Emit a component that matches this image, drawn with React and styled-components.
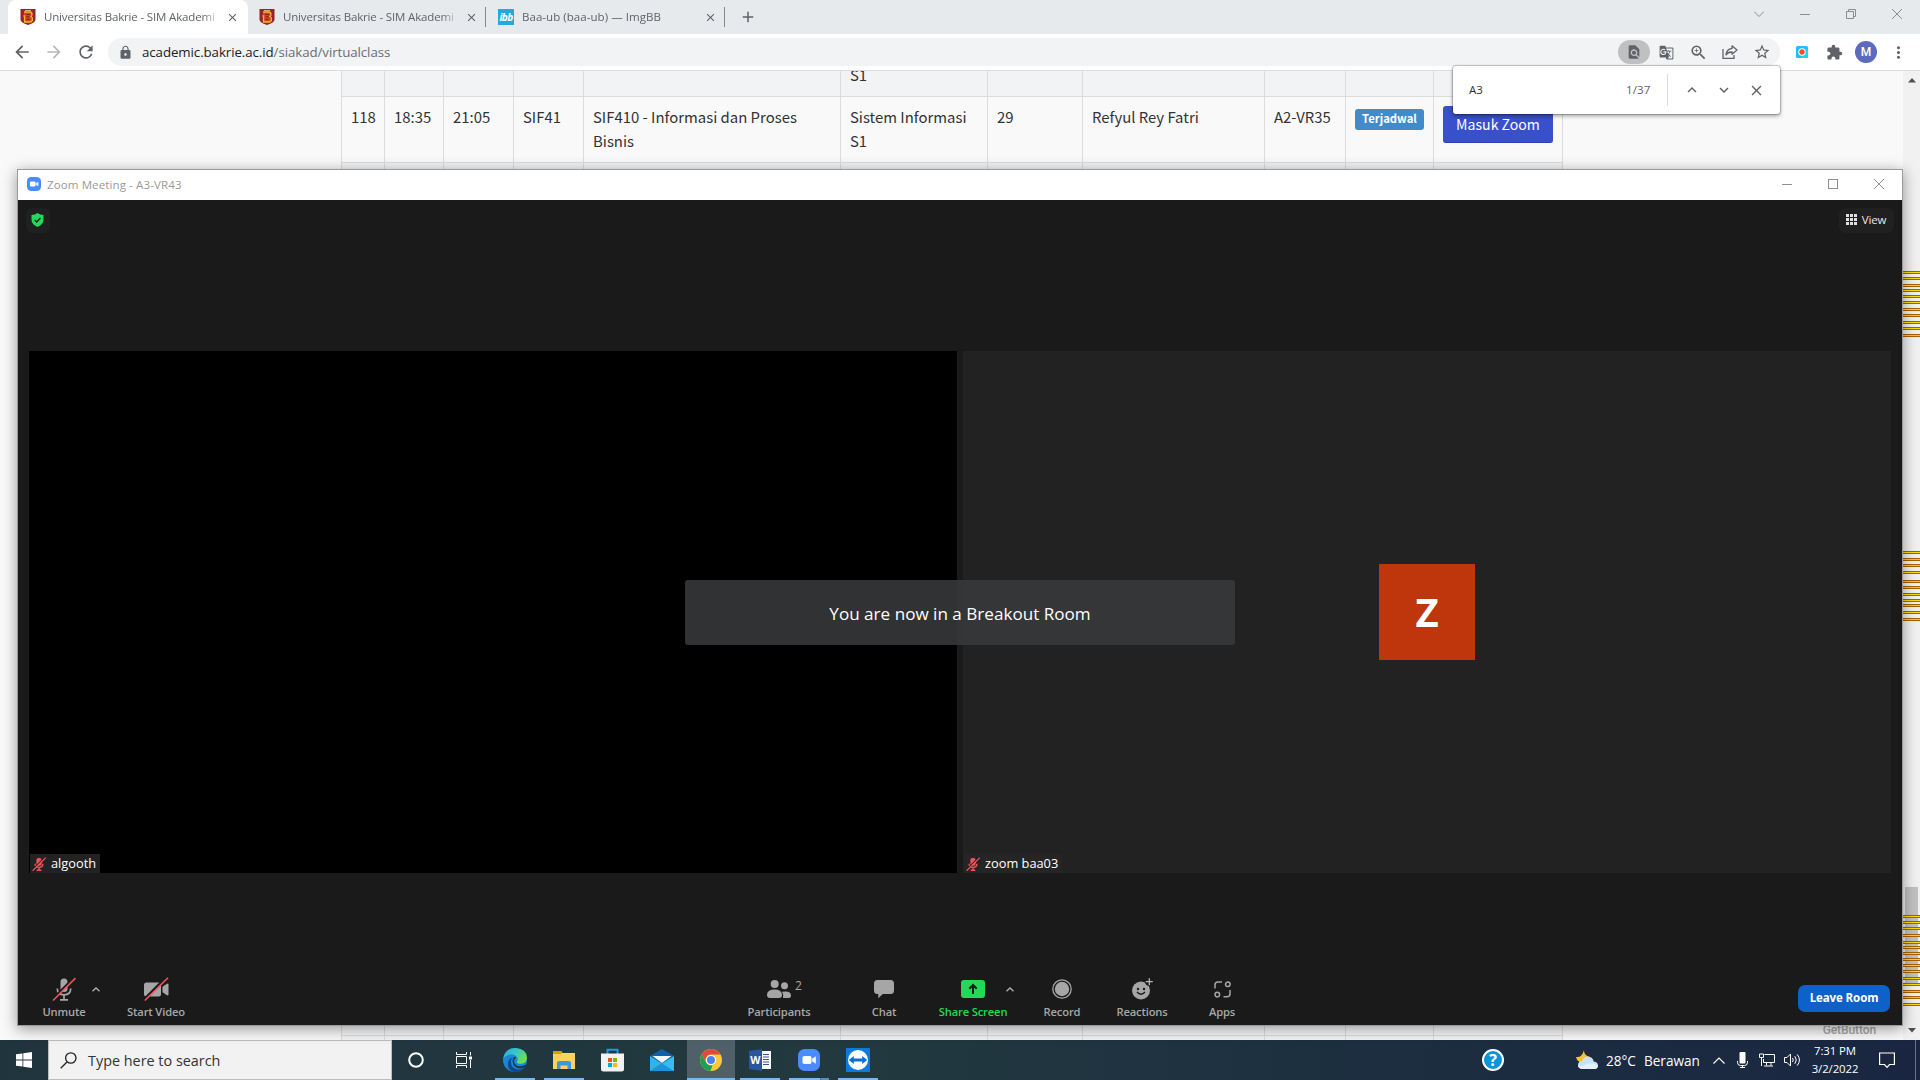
import styled, { createGlobalStyle, css } from "styled-components";
import {
  MdArrowBack,
  MdArrowForward,
  MdRefresh,
  MdLock,
  MdFindInPage,
  MdGTranslate,
  MdZoomIn,
  MdStarBorder,
  MdExtension,
  MdMoreVert,
  MdClose,
  MdAdd,
  MdKeyboardArrowUp,
  MdKeyboardArrowDown,
} from "react-icons/md";

const GlobalStyle = createGlobalStyle`
  * {
    box-sizing: border-box;
  }

  body {
    margin: 0;
    font-family: "Open Sans", "Noto Sans", sans-serif;
  }

  svg {
    display: block;
    flex-shrink: 0;
  }
`;

const Desktop = styled.div`
  position: relative;
  display: flex;
  flex-direction: column;
  width: 1920px;
  height: 1080px;
  overflow: hidden;
`;

/* ---------- browser ---------- */

const Browser = styled.div`
  display: flex;
  flex-direction: column;
  height: 1040px;
  background-color: #ffffff;
`;

const TabStrip = styled.div`
  display: flex;
  height: 34px;
  padding-left: 8px;
  background-color: #e7eaed;
`;

const Tab = styled.div`
  display: flex;
  align-items: center;
  width: 239px;
  padding-left: 12px;
  color: #5f6368;
  ${(props) =>
    props.$active &&
    css`
      background-color: #ffffff;
      border-radius: 8px 8px 0 0;
      box-shadow: 1px 0 0 #ffffff;
    `}
`;

const TabTitle = styled.div`
  width: 175px;
  margin: 0 0 1px 8px;
  font-size: 11.5px;
  letter-spacing: ${(props) => (props.$long ? "-0.16px" : "0.05px")};
  white-space: nowrap;
  mask-image: linear-gradient(to right, #000 158px, transparent 177px);
`;

const TabClose = styled.div`
  display: flex;
  justify-content: center;
  width: 16px;
  margin-left: 5px;
`;

const TabDivider = styled.div`
  width: 1px;
  height: 20px;
  margin-left: auto;
  background-color: #85898d;
`;

const NewTab = styled.div`
  display: flex;
  align-items: center;
  margin-left: 14px;
  color: #5f6368;
`;

const WindowButtons = styled.div`
  display: flex;
  align-items: center;
  height: 28px;
  margin-left: auto;
  color: ${(props) => props.$color || "#8a8c8e"};
`;

const WindowButton = styled.div`
  display: flex;
  justify-content: center;
  width: 46px;
`;

const Toolbar = styled.div`
  display: flex;
  align-items: center;
  height: 37px;
  padding: 0 6px;
  border-bottom: 1px solid #d9dbdd;
  color: #5f6368;
`;

const Slot = styled.div`
  display: flex;
  align-items: center;
  justify-content: center;
  width: 32px;
  height: 24px;
  border-radius: 12px;
  opacity: ${(props) => (props.$faded ? 0.45 : 1)};
  background-color: ${(props) => (props.$active ? "#bfc0c2" : "transparent")};
`;

const AddressBar = styled.div`
  display: flex;
  align-items: center;
  width: 1672px;
  height: 28px;
  margin: 0 6px;
  padding: 0 2px 0 10px;
  border-radius: 14px;
  background-color: #f1f3f4;
`;

const Url = styled.div`
  flex: 1;
  padding-left: 9px;
  font-size: 13.3px;
  letter-spacing: -0.08px;
  color: #6a6e73;

  b {
    font-weight: 400;
    color: #202124;
  }
`;

const Avatar = styled.div`
  width: 22px;
  height: 22px;
  border-radius: 50%;
  background-color: #5c6bc0;
  color: #ffffff;
  font: 500 12px/22px Roboto, sans-serif;
  text-align: center;
`;

const Page = styled.div`
  display: flex;
  flex: 1;
  min-height: 0;
`;

const Content = styled.div`
  position: relative;
  display: flex;
  flex-direction: column;
  justify-content: space-between;
  width: 1903px;
  padding-left: 341px;
  background-color: #f9f9f9;
  overflow: hidden;
`;

const Table = styled.div`
  width: 1222px;
  border-right: 1px solid #dadcde;
  font-family: "Noto Sans CJK SC", sans-serif;
`;

const Row = styled.div`
  display: grid;
  grid-template-columns: 43px 59px 70px 70px 257px 147px 95px 182px 81px 88px 129px;
  height: ${(props) => props.$height}px;
  background-color: ${(props) => (props.$shaded ? "#f2f3f5" : "#f9f9f9")};
  border-bottom: ${(props) => (props.$open ? "none" : "1px solid #dadcde")};
`;

const Cell = styled.div`
  display: flex;
  flex-direction: column;
  align-items: flex-start;
  justify-content: ${(props) => (props.$bottom ? "flex-end" : "flex-start")};
  padding: 8px 0 ${(props) => (props.$bottom ? 9 : 8)}px 9px;
  border-left: 1px solid #dadcde;
  font-size: 14.9px;
  line-height: 24px;
  color: #333333;
  white-space: nowrap;
  overflow: hidden;
`;

const Badge = styled.div`
  width: 69px;
  height: 21px;
  margin-top: 4px;
  border-radius: 3px;
  background-color: #428bca;
  color: #ffffff;
  font-size: 11.3px;
  font-weight: 700;
  line-height: 19px;
  text-align: center;
`;

const JoinButton = styled.div`
  width: 110px;
  height: 37px;
  margin-top: 1px;
  border-radius: 3px;
  border-bottom: 1px solid #2c42b4;
  background-color: #3850cb;
  color: #ffffff;
  font-size: 14.1px;
  line-height: 36px;
  text-align: center;
`;

const GetButton = styled.div`
  position: absolute;
  right: 27px;
  bottom: 2px;
  font: 500 12px/16px Roboto, sans-serif;
  letter-spacing: -0.1px;
  color: #a5a5a5;
`;

const Scrollbar = styled.div`
  position: relative;
  display: flex;
  flex-direction: column;
  align-items: center;
  justify-content: space-between;
  width: 17px;
  padding: 7px 0;
  background-color: #f1f1f1;
`;

const Thumb = styled.div`
  position: absolute;
  top: 816px;
  left: 2px;
  width: 13px;
  height: 97px;
  background-color: #c1c1c1;
`;

const Match = styled.div`
  position: absolute;
  left: 0;
  width: 17px;
  height: 3px;
  border: solid #a86200;
  border-width: 1px 0;
  background-color: ${(props) => (props.$amber ? "#ffc21a" : "#ffdd00")};
`;

const FindBar = styled.div`
  position: absolute;
  top: 66px;
  left: 1453px;
  display: flex;
  align-items: center;
  width: 327px;
  height: 48px;
  padding: 0 8px 0 16px;
  border-radius: 3px;
  background-color: #ffffff;
  box-shadow: 0 0 1px 1px rgba(0, 0, 0, 0.2), 0 2px 4px rgba(0, 0, 0, 0.35);
  color: #5f6368;
  font-size: 11.5px;
  z-index: 1;
`;

const FindQuery = styled.div`
  width: 157px;
  padding-bottom: 2px;
  color: #303134;
`;

const FindCount = styled.div`
  width: 41px;
  padding-bottom: 2px;
  letter-spacing: 0.1px;
`;

const FindDivider = styled.div`
  width: 1px;
  height: 32px;
  margin-right: 8px;
  background-color: #dadce0;
`;

/* ---------- zoom meeting window ---------- */

const MeetingWindow = styled.div`
  position: absolute;
  top: 169px;
  left: 17px;
  display: flex;
  flex-direction: column;
  width: 1886px;
  height: 857px;
  border: 1px solid #999b9b;
  background-color: #1a1a1a;
  box-shadow: 0 3px 14px rgba(0, 0, 0, 0.4);
`;

const TitleBar = styled.div`
  display: flex;
  align-items: center;
  height: 30px;
  padding: 0 0 2px 9px;
  background-color: #ffffff;
`;

const Title = styled.div`
  margin-left: 6px;
  font-size: 11.5px;
  letter-spacing: 0.12px;
  color: #999999;
`;

const MeetingHeader = styled.div`
  display: flex;
  align-items: flex-start;
  justify-content: space-between;
  height: 151px;
  padding: 8px 8px 0 8px;
`;

const HeaderChip = styled.div`
  display: flex;
  align-items: center;
  justify-content: center;
  gap: 5px;
  width: ${(props) => props.$width}px;
  height: 25px;
  padding: 0 1px 2px 0;
  border-radius: 6px;
  background-color: #202020;
  color: #e6e6e6;
  font-size: 11.5px;
  letter-spacing: -0.1px;
`;

const Stage = styled.div`
  position: relative;
  display: flex;
  gap: 6px;
  height: 522px;
  padding: 0 11px;
`;

const Tile = styled.div`
  position: relative;
  display: flex;
  align-items: center;
  justify-content: center;
  width: 928px;
  background-color: ${(props) => props.$color};
`;

const NameTag = styled.div`
  position: absolute;
  left: 1px;
  bottom: 0;
  display: flex;
  align-items: center;
  gap: 5px;
  height: 19px;
  padding: 0 4px 0 2px;
  background-color: rgba(38, 38, 38, 0.9);
  color: #ffffff;
  font-size: 12.8px;
  line-height: 19px;
`;

const Initial = styled.div`
  width: 96px;
  height: 96px;
  background-color: #bf360c;
  color: #ffffff;
  font-size: 40px;
  font-weight: 700;
  line-height: 95px;
  text-align: center;
`;

const Toast = styled.div`
  position: absolute;
  top: 229px;
  left: 667px;
  width: 550px;
  height: 65px;
  border-radius: 3px;
  background-color: rgba(56, 57, 59, 0.87);
  color: #ffffff;
  font-size: 17.1px;
  line-height: 67px;
  text-align: center;
`;

const MeetingControls = styled.div`
  display: flex;
  align-items: flex-end;
  flex: 1;
  padding: 0 12px 4px 20px;
`;

const Control = styled.div`
  display: flex;
  flex-direction: column;
  align-items: center;
  width: ${(props) => props.$width}px;
  margin-left: ${(props) => props.$gap || 0}px;
  color: ${(props) => (props.$green ? "#23d959" : "#a8a8a8")};
  font-size: 11.2px;
  font-weight: 600;
  line-height: 18px;
  letter-spacing: -0.15px;
  white-space: nowrap;
`;

const ControlIcon = styled.div`
  position: relative;
  display: flex;
  align-items: center;
  height: 26px;
  margin-bottom: 1px;
`;

const Count = styled.span`
  position: absolute;
  left: 28px;
  top: 1px;
  font-size: 12px;
  font-weight: 400;
`;

const Chevron = styled.div`
  display: flex;
  justify-content: center;
  width: 12px;
  padding-bottom: 29px;
`;

const LeaveButton = styled.div`
  width: 92px;
  height: 27px;
  margin: 0 0 9px auto;
  border-radius: 7px;
  background-color: #0e61c8;
  color: #ffffff;
  font-size: 11.5px;
  font-weight: 700;
  line-height: 25px;
  text-align: center;
  letter-spacing: -0.1px;
`;

/* ---------- taskbar ---------- */

const Taskbar = styled.div`
  display: flex;
  height: 40px;
  background: linear-gradient(to right, #20343e, #22393f 45%, #1c2f40 70%, #1a2641);
  color: #ffffff;
`;

const StartButton = styled.div`
  display: flex;
  align-items: center;
  justify-content: center;
  width: 48px;
`;

const SearchBox = styled.div`
  display: flex;
  align-items: center;
  gap: 11px;
  width: 344px;
  padding-left: 11px;
  border: 1px solid #bdbdbd;
  background-color: #f2f2f2;
  color: #333333;
  font-size: 14.4px;
`;

const TaskItem = styled.div`
  display: flex;
  align-items: center;
  justify-content: center;
  width: ${(props) => props.$width || 49}px;
  background: ${(props) =>
    props.$running
      ? "linear-gradient(#76b9ed, #76b9ed) center bottom / 40px 2px no-repeat"
      : "none"};
  ${(props) =>
    props.$focused &&
    css`
      background: linear-gradient(#76b9ed, #76b9ed) center bottom / 48px 2px
        no-repeat #4f6068;
    `}
  ${(props) =>
    props.$stacked &&
    css`
      background: linear-gradient(
          to right,
          #76b9ed 31px,
          #45718f 31px,
          #45718f 32px,
          #5a8fb8 32px
        )
        center bottom / 40px 2px no-repeat;
    `}
`;

const Tray = styled.div`
  display: flex;
  align-items: center;
  margin-left: auto;
  font-size: 13.6px;
`;

const TrayIcon = styled.div`
  display: flex;
  justify-content: center;
  width: ${(props) => props.$width}px;
`;

const Weather = styled.div`
  display: flex;
  align-items: center;
  width: 127px;
  white-space: nowrap;

  span + span {
    margin-left: 8px;
  }
`;

const WeatherText = styled.span`
  &:first-of-type {
    margin-left: 8px;
  }
`;

const Clock = styled.div`
  width: 60px;
  font-size: 11.4px;
  line-height: 18px;
  letter-spacing: -0.1px;
  text-align: center;
`;

const ShowDesktop = styled.div`
  width: 5px;
  height: 40px;
  border-left: 1px solid #6b7285;
`;

/* ---------- icons ---------- */

const BakrieIcon = () => (
  <svg width="16" height="16" viewBox="0 0 16 16">
    <path d="M.5 0h15v10.500q0 3-7.500 5.500Q.5 13.500.5 10.500z" fill="#96222c" />
    <path
      d="M4 3h6q2 0 2 2.500 0 1.500-1 2 1.500.7 1.500 2.500 0 3-2.500 3H4.500V7H3.500"
      fill="#d2461f"
      stroke="#f5b52d"
      strokeWidth="1.300"
    />
    <path d="M6.500 5.500h3M6.500 7.800h3M6.500 10.300h3" stroke="#7c1c22" strokeWidth="1" />
    <path d="M5 1.500h6" stroke="#e9cf9a" strokeWidth=".8" />
  </svg>
);

const ImgbbBox = styled.div`
  width: 16px;
  height: 16px;
  background-color: #23a8e0;
  color: #ffffff;
  font: italic 700 10px/16px "Open Sans", sans-serif;
  letter-spacing: -0.6px;
  text-align: center;
`;

const MinimizeIcon = () => (
  <svg width="10" height="10" fill="none" stroke="currentColor">
    <path d="M0 5.500h10" />
  </svg>
);

const MaximizeIcon = () => (
  <svg width="10" height="10" fill="none" stroke="currentColor">
    <rect x=".5" y=".5" width="9" height="9" />
  </svg>
);

const RestoreIcon = () => (
  <svg width="10" height="10" fill="none" stroke="currentColor">
    <path d="M.5 2.500h7v7h-7zM2.500 2.500v-2h7v7h-2" />
  </svg>
);

const CloseIcon = () => (
  <svg width="10" height="10" fill="none" stroke="currentColor">
    <path d="M0 0l10 10M10 0L0 10" />
  </svg>
);

const TabSearchIcon = () => (
  <svg width="10" height="10" fill="none" stroke="currentColor">
    <path d="M0 2.500l5 5 5-5" />
  </svg>
);

const ShareIcon = () => (
  <svg
    width="16"
    height="16"
    viewBox="0 0 16 16"
    fill="none"
    stroke="currentColor"
    strokeWidth="1.300"
  >
    <path d="M1 5v9.300h11V11" />
    <path d="M10 1.800l5 4.200-5 4.200V8Q6 7.800 4 11q.3-5.700 6-6.600z" strokeLinejoin="round" />
  </svg>
);

const RecorderIcon = () => (
  <svg width="12" height="12" viewBox="0 0 12 12">
    <rect width="12" height="12" rx="1.500" fill="#1fc0fb" />
    <path d="M12 3v7.500q0 1.500-1.500 1.500H5z" fill="#12dcf2" />
    <circle cx="6" cy="6" r="3.700" fill="#ffffff" />
    <circle cx="6" cy="6" r="2.700" fill="#fa4d2c" />
  </svg>
);

const ScrollArrow = ({ down }) => (
  <svg width="8" height="5" viewBox="0 0 8 5" fill="#505050">
    <path d={down ? "M0 0h8L4 4.500z" : "M0 4.500h8L4 0z"} />
  </svg>
);

const ZoomLogo = ({ size }) => (
  <svg width={size} height={size} viewBox="0 0 22 22">
    <rect width="22" height="22" rx="6.500" fill="#4a8cff" />
    <rect x="4.500" y="7" width="9" height="8" rx="1.800" fill="#ffffff" />
    <path d="M14.200 9.800L17.800 7.300v7.400l-3.600-2.500z" fill="#ffffff" />
  </svg>
);

const ShieldIcon = () => (
  <svg width="13" height="14" viewBox="0 0 13 14">
    <path
      d="M6.500 0Q9 1.800 12.500 2v4.500q0 5-6 7.500-6-2.500-6-7.500V2Q4 1.800 6.500 0z"
      fill="#23d959"
    />
    <path d="M3.700 7l2 2.100 3.700-4" fill="none" stroke="#1a1a1a" strokeWidth="1.400" />
  </svg>
);

const GridIcon = () => (
  <svg width="11" height="11" fill="#e0e0e0">
    {[0, 4, 8].map((y) =>
      [0, 4, 8].map((x) => <rect key={`${x}-${y}`} x={x} y={y} width="3" height="3" />)
    )}
  </svg>
);

const MicOffIcon = ({ small }) => (
  <svg
    width={small ? 14 : 24}
    height={small ? 14 : 24}
    viewBox="0 0 24 24"
    fill="none"
    stroke={small ? "#f0545a" : "#a6a6a6"}
    strokeWidth={small ? 2.4 : 1.7}
  >
    <rect
      x={small ? 7.5 : 8.5}
      y="1.500"
      width={small ? 9 : 7}
      height="13.500"
      rx="3.500"
      fill={small ? "#f0545a" : "#a6a6a6"}
      stroke="none"
    />
    <path d="M5.300 11.500q0 6.300 6.700 6.300t6.700-6.300M12 17.500v5M8 22.800h8" />
    <path d="M.5 22L22.500 0" stroke="#1a1a1a" strokeWidth="2" />
    <path d="M1 23.500L23.500 1" stroke="#f0545a" strokeWidth={small ? 2.2 : 1.6} />
  </svg>
);

const CameraOffIcon = () => (
  <svg width="25" height="24" viewBox="0 0 25 24" fill="#a6a6a6">
    <rect x="0" y="5.500" width="17" height="14" rx="2.500" />
    <path d="M18.500 9.700l4.500-3q1.500-.7 1.500.8v10q0 1.500-1.500.8l-4.500-3z" />
    <path d="M0 22.500L22.500 0" stroke="#1a1a1a" strokeWidth="2.400" />
    <path d="M.8 23.500L24 .8" stroke="#f0545a" strokeWidth="1.600" />
  </svg>
);

const CaretIcon = () => (
  <svg width="8" height="5" viewBox="0 0 8 5" fill="none" stroke="#b0b0b0" strokeWidth="1.300">
    <path d="M.5 4.300L4 1l3.500 3.300" />
  </svg>
);

const PeopleIcon = () => (
  <svg width="24" height="18" viewBox="0 0 24 18" fill="#a6a6a6">
    <circle cx="7.700" cy="4" r="4" />
    <path d="M0 15q0-5.500 7.500-5.500T15 15q0 3-3 3H3q-3 0-3-3z" />
    <circle cx="17.500" cy="5.800" r="3.500" />
    <path d="M16 18q.8-3-.9-6.300Q24 10.300 24 15.500 24 18 21.500 18z" />
  </svg>
);

const ChatIcon = () => (
  <svg width="20" height="20" viewBox="0 0 20 20" fill="#a6a6a6">
    <path d="M3.500 1h13Q20 1 20 4.500v7Q20 15 16.500 15H8.800L4.300 19.300V15H3.500Q0 15 0 11.500v-7Q0 1 3.500 1z" />
  </svg>
);

const ShareScreenIcon = () => (
  <svg width="24" height="18" viewBox="0 0 24 18">
    <rect width="24" height="18" rx="3" fill="#23d959" />
    <path d="M12 14V5.500M8.300 8.700L12 5l3.700 3.700" fill="none" stroke="#1a1a1a" strokeWidth="2" />
  </svg>
);

const RecordIcon = () => (
  <svg width="20" height="20" viewBox="0 0 20 20">
    <circle cx="10" cy="10" r="9.200" fill="none" stroke="#a6a6a6" strokeWidth="1.300" />
    <circle cx="10" cy="10" r="7.200" fill="#a6a6a6" />
  </svg>
);

const ReactionIcon = () => (
  <svg width="22" height="22" viewBox="0 0 22 22">
    <circle cx="10" cy="12.500" r="9" fill="#a6a6a6" />
    <circle cx="18.300" cy="3.700" r="4.300" fill="#1a1a1a" />
    <path d="M18.300 .2v7M14.800 3.700h7" stroke="#b8b8b8" strokeWidth="1.300" />
    <circle cx="7" cy="11" r="1.200" fill="#1a1a1a" />
    <circle cx="13" cy="11" r="1.200" fill="#1a1a1a" />
    <path d="M6 14q4 4.500 8 0" fill="none" stroke="#1a1a1a" strokeWidth="1.400" />
  </svg>
);

const AppsIcon = () => (
  <svg
    width="17"
    height="17"
    viewBox="0 0 17 17"
    fill="none"
    stroke="#a6a6a6"
    strokeWidth="1.500"
  >
    <path d="M1 7.500V4q0-3 3-3h4M9.500 15.800H13q3 0 3-3V9" />
    <circle cx="13.800" cy="3.300" r="2.300" />
    <circle cx="3.300" cy="13.600" r="2.300" />
  </svg>
);

const WindowsIcon = () => (
  <svg width="16" height="16" viewBox="0 0 16 16" fill="#ffffff">
    <path d="M0 2.300l6.500-.9v6.200H0zM7.300 1.300L16 0v7.600H7.300zM0 8.400h6.500v6.200L0 13.700zM7.300 8.400H16V16l-8.700-1.300z" />
  </svg>
);

const SearchIcon = () => (
  <svg width="17" height="17" viewBox="0 0 17 17" fill="none" stroke="#222222" strokeWidth="1.300">
    <circle cx="10.800" cy="6" r="5.200" />
    <path d="M7 10L.7 16.300" />
  </svg>
);

const CortanaIcon = () => (
  <svg width="16" height="16" viewBox="0 0 16 16">
    <circle cx="8" cy="8" r="6.800" fill="none" stroke="#ffffff" strokeWidth="2" />
  </svg>
);

const TaskViewIcon = () => (
  <svg width="16" height="16" viewBox="0 0 16 16" fill="none" stroke="#ffffff">
    <path d="M.5 4.500h10v7H.5zM.5 0v2.500h10V0M.5 16v-2.500h10V16M14.500 0v3.500M14.500 8v8" />
    <path d="M13 4.500h3v3h-3z" fill="#ffffff" stroke="none" />
  </svg>
);

const EdgeIcon = () => (
  <svg width="24" height="24" viewBox="0 0 24 24">
    <defs>
      <linearGradient id="edgeTop" x1="0" x2="1" y1="0" y2=".6">
        <stop offset="0" stopColor="#2aa9e0" />
        <stop offset=".5" stopColor="#36c6c8" />
        <stop offset="1" stopColor="#6fe04c" />
      </linearGradient>
    </defs>
    <circle cx="12" cy="12" r="12" fill="#1b86d8" />
    <path
      d="M.3 10.500Q2 0 12.500 0 24 .8 24 10q-.4 5.500-6 5.700-4.500 0-4.300-2.200 2-1.800.2-4.500Q10.500 4.800 5 7 1.300 8.700.3 10.500z"
      fill="url(#edgeTop)"
    />
    <path d="M8 12q-1 8 7 9.500 4 .3 7.200-3Q18 25 11 24 4 22.500 5 14.500 6 10 10.500 9.500 8.500 10 8 12z" fill="#114a8b" />
    <path d="M13.500 9q-3.500 2.500-2 6.500 3 4.500 10.500 1.500 1.500-.6.800.7-1 1.600-1.400 1.700-6 2.600-10.400-1.700-3-4.700 0-8.500 1-1 2.500-.2z" fill="#223840" />
  </svg>
);

const ExplorerIcon = () => (
  <svg width="22" height="18" viewBox="0 0 22 18">
    <path d="M0 0h8l1.500 2H22v16H0z" fill="#ffd663" />
    <path d="M0 0h8l1.500 1.500L8 3H0z" fill="#dd9b0c" />
    <path d="M0 3h22v14H0z" fill="#fdd15d" />
    <path d="M4 18v-6q0-2 2-2h10q2 0 2 2v6h-3.500v-3.500h-7V18z" fill="#3f97dc" />
  </svg>
);

const StoreIcon = () => (
  <svg width="23" height="24" viewBox="0 0 23 24">
    <path d="M6.500 6V1.800h10V6" fill="none" stroke="#1a9be6" strokeWidth="2" />
    <path d="M0 5.500h23V21q0 2.500-2.500 2.500h-18Q0 23.500 0 21z" fill="#f2f2f2" />
    <path d="M7 10h4v4H7z" fill="#f25022" />
    <path d="M12 10h4v4h-4z" fill="#7fba00" />
    <path d="M7 15h4v4H7z" fill="#00a4ef" />
    <path d="M12 15h4v4h-4z" fill="#ffb900" />
  </svg>
);

const MailIcon = () => (
  <svg width="24" height="22" viewBox="0 0 24 22">
    <path d="M0 7l12-7 12 7-12 8z" fill="#0f61ad" />
    <path d="M2.500 7h19L12 14z" fill="#f4f7fa" />
    <path d="M0 7l12 7.500L0 22z" fill="#2eb3ee" />
    <path d="M24 7v15H0l12-7.500z" fill="#35bdf3" />
    <path d="M12 14.500L24 22H0z" fill="#1c94dc" />
  </svg>
);

const ChromeIcon = () => (
  <svg width="22" height="22" viewBox="0 0 22 22">
    <circle cx="11" cy="11" r="11" fill="#fbc934" />
    <path d="M1.500 5.500A11 11 0 0 1 20.500 5.500H11A5.500 5.500 0 0 0 6.200 13.700z" fill="#dd4b3e" />
    <path d="M1.500 5.500L6.200 13.700A5.500 5.500 0 0 0 12.500 16.300L10.500 22A11 11 0 0 1 1.500 5.500z" fill="#1f9e58" />
    <circle cx="11" cy="11" r="5.100" fill="#ffffff" />
    <circle cx="11" cy="11" r="4" fill="#4a82ee" />
  </svg>
);

const WordIcon = () => (
  <svg width="22" height="22" viewBox="0 0 22 22">
    <path d="M12 2h10v18H12z" fill="#ffffff" />
    <path d="M14 5.500h6M14 8h6M14 10.500h6M14 13h6M14 15.500h6" stroke="#2b579a" strokeWidth="1.200" />
    <path d="M0 2L13 0v22L0 20z" fill="#2b579a" />
    <text
      x="6.300"
      y="15"
      fill="#ffffff"
      fontFamily="Open Sans"
      fontSize="10.500"
      fontWeight="700"
      textAnchor="middle"
    >
      W
    </text>
  </svg>
);

const TeamViewerIcon = () => (
  <svg width="24" height="24" viewBox="0 0 24 24">
    <rect width="24" height="24" fill="#0d7ade" />
    <circle cx="12" cy="12" r="10" fill="#ffffff" />
    <path d="M2.800 12l5-4v2.600h8.400V8l5 4-5 4v-2.600H7.800V16z" fill="#0d6fd0" />
  </svg>
);

const HelpBadge = styled.div`
  width: 22px;
  height: 22px;
  border: 2px solid #ffffff;
  border-radius: 50%;
  background-color: #0a94da;
  color: #ffffff;
  font-size: 16px;
  font-weight: 700;
  line-height: 18px;
  text-align: center;
`;

const WeatherIcon = () => (
  <svg width="22" height="20" viewBox="0 0 22 20">
    <path d="M8 0q-.5 5 5.500 7L9 12H3.500Q.5 10.500 0 7q6 1 8-7z" fill="#fbc02d" />
    <path d="M6 19q-4-.5-4-4t4-4q1.500-4.500 6-4.500 5 .3 5.700 5 4.300.5 4.300 4T18 19z" fill="#c7e1f5" />
    <path d="M6 19q-4-.5-4-4 4 3 8-1 5-2 12 1.500-.5 3.500-4 3.500z" fill="#e3f1fb" />
  </svg>
);

const TrayCaret = () => (
  <svg width="12" height="7" viewBox="0 0 12 7" fill="none" stroke="#ffffff" strokeWidth="1.200">
    <path d="M.5 6.500L6 1l5.500 5.500" />
  </svg>
);

const TrayMic = () => (
  <svg width="11" height="16" viewBox="0 0 11 16" fill="none" stroke="#ffffff">
    <rect x="2.500" y="0" width="6" height="11.500" rx="1" fill="#ffffff" stroke="none" />
    <path d="M.5 9v1.500q0 3 3 3h4q3 0 3-3V9M5.500 13.500v2M3 15.500h5" />
  </svg>
);

const TrayNetwork = () => (
  <svg width="16" height="14" viewBox="0 0 16 14" fill="none" stroke="#ffffff">
    <path d="M5.500 1.500h10v8h-11V6M7.500 9.500v3M12 9.500v3M5 13h9" />
    <path d="M.5 1h4v3.500h-4zM2.500 4.500V13" />
  </svg>
);

const TraySpeaker = () => (
  <svg width="17" height="14" viewBox="0 0 17 14" fill="none" stroke="#ffffff">
    <path d="M.5 4.500H3L6.500 1v12L3 9.500H.5z" />
    <path d="M8.500 5q1.500 2 0 4M10.800 3.200q3 3.800 0 7.600M13.200 1.400q4.500 5.600 0 11.200" />
  </svg>
);

const NotificationIcon = () => (
  <svg width="16" height="17" viewBox="0 0 16 17" fill="none" stroke="#ffffff" strokeWidth="1.200">
    <path d="M.6 1h14.800v11.500H10.500L8 15.300l-2.500-2.800H.6z" />
  </svg>
);

/* ---------- data ---------- */

const tabs = [
  { title: "Universitas Bakrie - SIM Akademi", icon: <BakrieIcon />, long: true, active: true },
  { title: "Universitas Bakrie - SIM Akademi", icon: <BakrieIcon />, long: true, divider: true },
  { title: "Baa-ub (baa-ub) — ImgBB", icon: <ImgbbBox>ibb</ImgbbBox>, divider: true },
];

const columns = Array.from({ length: 11 }, (_, i) => i);

const classRow = [
  ["118"],
  ["18:35"],
  ["21:05"],
  ["SIF41"],
  ["SIF410 - Informasi dan Proses", "Bisnis"],
  ["Sistem Informasi", "S1"],
  ["29"],
  ["Refyul Rey Fatri"],
  ["A2-VR35"],
];

// top of every search hit on the scrollbar track
const matches = [
  200, 206, 213, 218, 224, 230, 237, 243, 250, 256, 263, 480, 487, 493, 500, 509, 515, 522, 528,
  533, 540, 547, 844, 850, 856, 863, 870, 875, 881, 887, 893, 899, 906, 912, 919, 925, 932,
];
const amberMatches = [243, 263, 487, 493, 509, 515, 533, 547, 919, 925];

const BlankRow = (props) => (
  <Row {...props}>
    {columns.map((i) => (
      <Cell key={i} $bottom>
        {i === 5 && props.$label}
      </Cell>
    ))}
  </Row>
);

const App = () => {
  return (
    <Desktop>
      <GlobalStyle />
      <Browser>
        <TabStrip>
          {tabs.map((tab, index) => (
            <Tab key={index} $active={tab.active}>
              {tab.icon}
              <TabTitle $long={tab.long}>{tab.title}</TabTitle>
              <TabClose>
                <MdClose size={13} />
              </TabClose>
              {tab.divider && <TabDivider />}
            </Tab>
          ))}
          <NewTab>
            <MdAdd size={18} />
          </NewTab>
          <WindowButtons>
            <WindowButton>
              <TabSearchIcon />
            </WindowButton>
            <WindowButton>
              <MinimizeIcon />
            </WindowButton>
            <WindowButton>
              <RestoreIcon />
            </WindowButton>
            <WindowButton>
              <CloseIcon />
            </WindowButton>
          </WindowButtons>
        </TabStrip>

        <Toolbar>
          <Slot>
            <MdArrowBack size={20} />
          </Slot>
          <Slot $faded>
            <MdArrowForward size={20} />
          </Slot>
          <Slot>
            <MdRefresh size={20} />
          </Slot>
          <AddressBar>
            <MdLock size={15} />
            <Url>
              <b>academic.bakrie.ac.id</b>/siakad/virtualclass
            </Url>
            <Slot $active>
              <MdFindInPage size={16} />
            </Slot>
            <Slot>
              <MdGTranslate size={15} />
            </Slot>
            <Slot>
              <MdZoomIn size={19} />
            </Slot>
            <Slot>
              <ShareIcon />
            </Slot>
            <Slot>
              <MdStarBorder size={18} />
            </Slot>
          </AddressBar>
          <Slot>
            <RecorderIcon />
          </Slot>
          <Slot>
            <MdExtension size={17} />
          </Slot>
          <Slot>
            <Avatar>M</Avatar>
          </Slot>
          <Slot>
            <MdMoreVert size={19} />
          </Slot>
        </Toolbar>

        <Page>
          <Content>
            <Table>
              <BlankRow $height={26} $shaded $label="S1" />
              <Row $height={66}>
                {classRow.map((lines, index) => (
                  <Cell key={index}>
                    {lines.map((line) => (
                      <div key={line}>{line}</div>
                    ))}
                  </Cell>
                ))}
                <Cell>
                  <Badge>Terjadwal</Badge>
                </Cell>
                <Cell>
                  <JoinButton>Masuk Zoom</JoinButton>
                </Cell>
              </Row>
              <BlankRow $height={26} $shaded $open />
            </Table>
            <Table>
              <BlankRow $height={30} />
              <BlankRow $height={4} $shaded $open />
            </Table>
            <GetButton>GetButton</GetButton>
          </Content>
          <Scrollbar>
            <ScrollArrow />
            <ScrollArrow down />
            <Thumb />
            {matches.map((top) => (
              <Match key={top} $amber={amberMatches.includes(top)} style={{ top }} />
            ))}
          </Scrollbar>
        </Page>
      </Browser>

      <FindBar>
        <FindQuery>A3</FindQuery>
        <FindCount>1/37</FindCount>
        <FindDivider />
        <Slot>
          <MdKeyboardArrowUp size={18} />
        </Slot>
        <Slot>
          <MdKeyboardArrowDown size={18} />
        </Slot>
        <Slot>
          <MdClose size={17} />
        </Slot>
      </FindBar>

      <MeetingWindow>
        <TitleBar>
          <ZoomLogo size={14} />
          <Title>Zoom Meeting - A3-VR43</Title>
          <WindowButtons $color="#909090">
            <WindowButton>
              <MinimizeIcon />
            </WindowButton>
            <WindowButton>
              <MaximizeIcon />
            </WindowButton>
            <WindowButton>
              <CloseIcon />
            </WindowButton>
          </WindowButtons>
        </TitleBar>
        <MeetingHeader>
          <HeaderChip $width={24}>
            <ShieldIcon />
          </HeaderChip>
          <HeaderChip $width={55}>
            <GridIcon />
            View
          </HeaderChip>
        </MeetingHeader>
        <Stage>
          <Tile $color="#000000">
            <NameTag>
              <MicOffIcon small />
              algooth
            </NameTag>
          </Tile>
          <Tile $color="#222222">
            <Initial>Z</Initial>
            <NameTag>
              <MicOffIcon small />
              zoom baa03
            </NameTag>
          </Tile>
          <Toast>You are now in a Breakout Room</Toast>
        </Stage>
        <MeetingControls>
          <Control $width={52}>
            <ControlIcon>
              <MicOffIcon />
            </ControlIcon>
            Unmute
          </Control>
          <Chevron>
            <CaretIcon />
          </Chevron>
          <Control $width={90} $gap={9}>
            <ControlIcon>
              <CameraOffIcon />
            </ControlIcon>
            Start Video
          </Control>
          <Control $width={88} $gap={534}>
            <ControlIcon>
              <PeopleIcon />
              <Count>2</Count>
            </ControlIcon>
            Participants
          </Control>
          <Control $width={60} $gap={31}>
            <ControlIcon>
              <ChatIcon />
            </ControlIcon>
            Chat
          </Control>
          <Control $width={62} $gap={28} $green>
            <ControlIcon>
              <ShareScreenIcon />
            </ControlIcon>
            Share Screen
          </Control>
          <Chevron>
            <CaretIcon />
          </Chevron>
          <Control $width={50} $gap={21}>
            <ControlIcon>
              <RecordIcon />
            </ControlIcon>
            Record
          </Control>
          <Control $width={60} $gap={25}>
            <ControlIcon>
              <ReactionIcon />
            </ControlIcon>
            Reactions
          </Control>
          <Control $width={40} $gap={30}>
            <ControlIcon>
              <AppsIcon />
            </ControlIcon>
            Apps
          </Control>
          <LeaveButton>Leave Room</LeaveButton>
        </MeetingControls>
      </MeetingWindow>

      <Taskbar>
        <StartButton>
          <WindowsIcon />
        </StartButton>
        <SearchBox>
          <SearchIcon />
          Type here to search
        </SearchBox>
        <TaskItem $width={48}>
          <CortanaIcon />
        </TaskItem>
        <TaskItem $width={48}>
          <TaskViewIcon />
        </TaskItem>
        <TaskItem $width={54} $running>
          <EdgeIcon />
        </TaskItem>
        <TaskItem $width={44} $running>
          <ExplorerIcon />
        </TaskItem>
        <TaskItem $width={53}>
          <StoreIcon />
        </TaskItem>
        <TaskItem $width={46}>
          <MailIcon />
        </TaskItem>
        <TaskItem $width={2} />
        <TaskItem $width={48} $focused>
          <ChromeIcon />
        </TaskItem>
        <TaskItem $width={50} $running>
          <WordIcon />
        </TaskItem>
        <TaskItem $width={48} $stacked>
          <ZoomLogo size={22} />
        </TaskItem>
        <TaskItem $width={50} $running>
          <TeamViewerIcon />
        </TaskItem>
        <Tray>
          <TrayIcon $width={22}>
            <HelpBadge>?</HelpBadge>
          </TrayIcon>
          <TrayIcon $width={72} />
          <Weather>
            <WeatherIcon />
            <WeatherText>28°C</WeatherText>
            <WeatherText>Berawan</WeatherText>
          </Weather>
          <TrayIcon $width={32}>
            <TrayCaret />
          </TrayIcon>
          <TrayIcon $width={15}>
            <TrayMic />
          </TrayIcon>
          <TrayIcon $width={34}>
            <TrayNetwork />
          </TrayIcon>
          <TrayIcon $width={16}>
            <TraySpeaker />
          </TrayIcon>
          <TrayIcon $width={5} />
          <Clock>
            7:31 PM
            <br />
            3/2/2022
          </Clock>
          <TrayIcon $width={44}>
            <NotificationIcon />
          </TrayIcon>
          <TrayIcon $width={6} />
          <ShowDesktop />
        </Tray>
      </Taskbar>
    </Desktop>
  );
};

export default App;
